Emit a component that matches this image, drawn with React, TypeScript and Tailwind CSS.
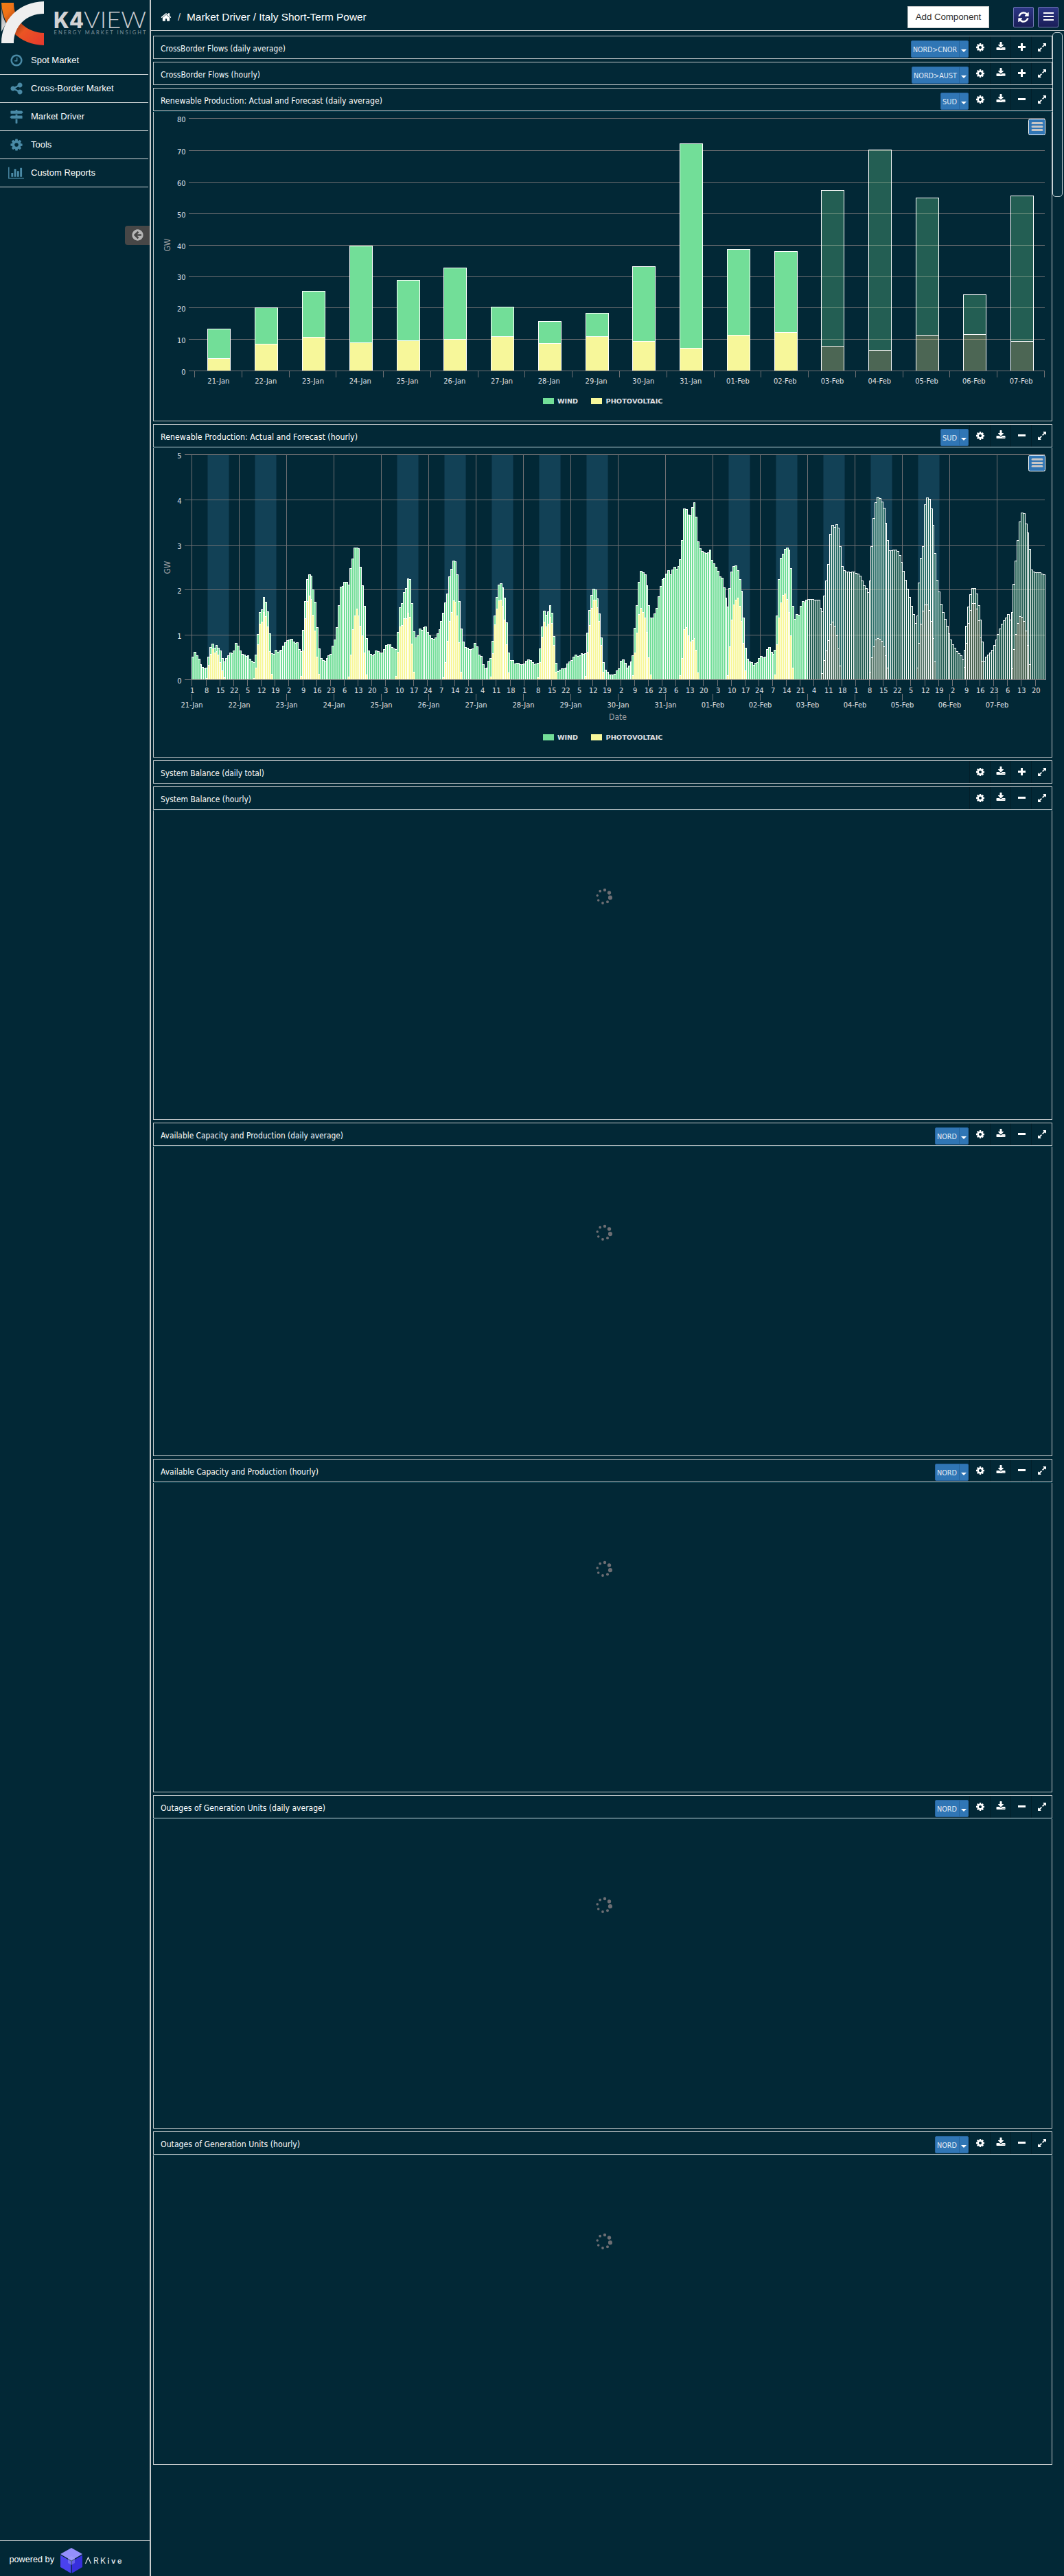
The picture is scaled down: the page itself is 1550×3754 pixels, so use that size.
import React from "react";

const ICONS = {
  home: "M1472 992v480q0 26-19 45t-45 19h-384v-384h-256v384h-384q-26 0-45-19t-19-45v-480q0-1 .5-3t.5-3l575-474 575 474q1 2 1 6zm223-69l-62 74q-8 9-21 11h-3q-13 0-21-7l-692-577-692 577q-12 8-24 7-13-2-21-11l-62-74q-8-10-7-23.5t11-21.5l719-599q32-26 76-26t76 26l244 204v-195q0-14 9-23t23-9h192q14 0 23 9t9 23v408l219 182q10 8 11 21.5t-7 23.5z",
  clock: "M1024 544v448q0 14-9 23t-23 9h-320q-14 0-23-9t-9-23v-64q0-14 9-23t23-9h224v-352q0-14 9-23t23-9h64q14 0 23 9t9 23zm416 352q0-148-73-273t-198-198-273-73-273 73-198 198-73 273 73 273 198 198 273 73 273-73 198-198 73-273zm224 0q0 209-103 385.5t-279.5 279.5-385.5 103-385.5-103-279.5-279.5-103-385.5 103-385.5 279.5-279.5 385.5-103 385.5 103 279.5 279.5 103 385.5z",
  share: "M1344 1024q133 0 226.5 93.5t93.5 226.5-93.5 226.5-226.5 93.5-226.5-93.5-93.5-226.5q0-12 2-34l-360-180q-92 86-218 86-133 0-226.5-93.5t-93.5-226.5 93.5-226.5 226.5-93.5q126 0 218 86l360-180q-2-22-2-34 0-133 93.5-226.5t226.5-93.5 226.5 93.5 93.5 226.5-93.5 226.5-226.5 93.5q-126 0-218-86l-360 180q2 22 2 34t-2 34l360 180q92-86 218-86z",
  signs: "M1745 297q10 10 10 23t-10 23l-141 141q-28 28-68 28h-1344q-26 0-45-19t-19-45v-256q0-26 19-45t45-19h576v-64q0-26 19-45t45-19h128q26 0 45 19t19 45v64h512q40 0 68 28zm-977 919h256v512q0 26-19 45t-45 19h-128q-26 0-45-19t-19-45v-512zm832-448q26 0 45 19t19 45v256q0 26-19 45t-45 19h-1344q-40 0-68-28l-141-141q-10-10-10-23t10-23l141-141q28-28 68-28h512v-192h256v192h576z",
  cog: "M1152 896q0-106-75-181t-181-75-181 75-75 181 75 181 181 75 181-75 75-181zm512-109v222q0 12-8 23t-20 13l-185 28q-19 54-39 91 35 50 107 138 10 12 10 25t-9 23q-27 37-99 108t-94 71q-12 0-26-9l-138-108q-44 23-91 38-16 136-29 186-7 28-36 28h-222q-14 0-24.5-8.5t-11.5-21.5l-28-184q-49-16-90-37l-141 107q-10 9-25 9-14 0-25-11-126-114-165-168-7-10-7-23 0-12 8-23 15-21 51-66.5t54-70.5q-27-50-41-99l-183-27q-13-2-21-12.5t-8-23.5v-222q0-12 8-23t19-13l186-28q14-46 39-92-40-57-107-138-10-12-10-24 0-10 9-23 26-36 98.5-107.5t94.5-71.5q13 0 26 10l138 107q44-23 91-38 16-136 29-186 7-28 36-28h222q14 0 24.5 8.5t11.5 21.5l28 184q49 16 90 37l142-107q9-9 24-9 13 0 25 10 129 119 165 170 7 8 7 22 0 12-8 23-15 21-51 66.5t-54 70.5q26 50 41 98l183 28q13 2 21 12.5t8 23.5z",
  chart: "M640 896v512h-256v-512h256zm384-512v1024h-256v-1024h256zm1024 1152v128h-2048v-1536h128v1408h1920zm-640-896v768h-256v-768h256zm384-384v1152h-256v-1152h256z",
  back: "M1408 960v-128q0-26-19-45t-45-19h-502l189-189q19-19 19-45t-19-45l-91-91q-18-18-45-18t-45 18l-362 362-91 91q-18 18-18 45t18 45l91 91 362 362q18 18 45 18t45-18l91-91q18-18 18-45t-18-45l-189-189h502q26 0 45-19t19-45zm256-64q0 209-103 385.5t-279.5 279.5-385.5 103-385.5-103-279.5-279.5-103-385.5 103-385.5 279.5-279.5 385.5-103 385.5 103 279.5 279.5 103 385.5z",
  refresh: "M1639 1056q0 5-1 7-64 268-268 434.5t-478 166.5q-146 0-282.5-55t-243.5-157l-129 129q-19 19-45 19t-45-19-19-45v-448q0-26 19-45t45-19h448q26 0 45 19t19 45-19 45l-137 137q71 66 161 102t187 36q134 0 250-65t186-179q11-17 53-117 8-23 30-23h192q13 0 22.5 9.5t9.5 22.5zm25-800v448q0 26-19 45t-45 19h-448q-26 0-45-19t-19-45 19-45l138-138q-148-137-349-137-134 0-250 65t-186 179q-11 17-53 117-8 23-30 23h-199q-13 0-22.5-9.5t-9.5-22.5v-7q65-268 270-434.5t480-166.5q146 0 284 55.5t245 156.5l130-129q19-19 45-19t45 19 19 45z",
  download: "M1344 1344q0-26-19-45t-45-19-45 19-19 45 19 45 45 19 45-19 19-45zm256 0q0-26-19-45t-45-19-45 19-19 45 19 45 45 19 45-19 19-45zm128-224v320q0 40-28 68t-68 28h-1472q-40 0-68-28t-28-68v-320q0-40 28-68t68-28h465l135 136q58 56 136 56t136-56l136-136h464q40 0 68 28t28 68zm-325-569q17 41-14 70l-448 448q-18 19-45 19t-45-19l-448-448q-31-29-14-70 17-39 59-39h256v-448q0-26 19-45t45-19h256q26 0 45 19t19 45v448h256q42 0 59 39z",
  expand: "M883 1056q0 13-10 23l-332 332 144 144q19 19 19 45t-19 45-45 19h-448q-26 0-45-19t-19-45v-448q0-26 19-45t45-19 45 19l144 144 332-332q10-10 23-10t23 10l114 114q10 10 10 23zm781-864v448q0 26-19 45t-45 19-45-19l-144-144-332 332q-10 10-23 10t-23-10l-114-114q-10-10-10-23t10-23l332-332-144-144q-19-19-19-45t19-45 45-19h448q26 0 45 19t19 45z",
};

function Icon({ name, className }: { name: keyof typeof ICONS; className: string }) {
  return (
    <svg viewBox={name === "chart" ? "0 0 2048 1792" : "0 0 1792 1792"} className={className} fill="currentColor">
      <path d={ICONS[name]} />
    </svg>
  );
}

const MENU: { icon: keyof typeof ICONS; label: string; size: string }[] = [
  { icon: "clock", label: "Spot Market", size: "h-5 w-5" },
  { icon: "share", label: "Cross-Border Market", size: "h-5 w-5" },
  { icon: "signs", label: "Market Driver", size: "h-5 w-5" },
  { icon: "cog", label: "Tools", size: "h-5 w-5" },
  { icon: "chart", label: "Custom Reports", size: "h-5 w-[23px]" },
];

function Logo() {
  return (
    <svg width="218" height="68" className="block shrink-0">
      <defs>
        <linearGradient id="lg-orange" x1="0" y1="0" x2="1" y2="1">
          <stop offset="0" stopColor="#f07f13" />
          <stop offset="1" stopColor="#e7382e" />
        </linearGradient>
        <linearGradient id="lg-grey" x1="0" y1="0" x2="0" y2="1">
          <stop offset="0" stopColor="#8d8d90" />
          <stop offset="1" stopColor="#e4e4e4" />
        </linearGradient>
        <linearGradient id="lg-shade" x1="0" y1="0" x2="1" y2="0.9">
          <stop offset="0.2" stopColor="#5a1c08" stopOpacity="0" />
          <stop offset="0.45" stopColor="#5a1c08" stopOpacity="0.55" />
          <stop offset="0.62" stopColor="#5a1c08" stopOpacity="0" />
        </linearGradient>
      </defs>
      <path d="M2 4C2 16 4 26 9 34L2 46Z" fill="url(#lg-grey)" />
      <path d="M2 4H20C20 30 38 47 64 48V66C28 65 4 40 2 4Z" fill="url(#lg-orange)" />
      <path d="M2 4H20C20 30 38 47 64 48V66C28 65 4 40 2 4Z" fill="url(#lg-shade)" />
      <path d="M2 63C2 28 28 3 64 2V20C38 20 20 38 20 63Z" fill="#efefef" />
      <text x="78" y="40.500" fontFamily="Inter" fontWeight="800" fontSize="32" fill="#d2d3d5" textLength="44" lengthAdjust="spacingAndGlyphs">K4</text>
      <text x="122" y="40.500" fontFamily="Lato" fontWeight="300" fontSize="33" fill="#c9ccd0" textLength="91" lengthAdjust="spacingAndGlyphs">VIEW</text>
      <text x="78.500" y="49.500" fontFamily="Lato" fontSize="7.500" fill="#7d8f98" textLength="134">ENERGY MARKET INSIGHT</text>
    </svg>
  );
}

function Sidebar() {
  return (
    <aside className="flex w-[220px] shrink-0 flex-col border-r-2 border-[#c8cccd]">
      <Logo />
      <nav className="w-[216px]">
        {MENU.map((m) => (
          <div key={m.label} className="flex h-[41px] items-center border-b border-[#d5d9da] text-[13px] text-white">
            <span className="flex w-[45px] justify-center pl-[2px] text-[#4a8aa6]">
              <Icon name={m.icon} className={m.size} />
            </span>
            <span>{m.label}</span>
          </div>
        ))}
      </nav>
      <button className="mt-14 flex h-7 w-9 items-center justify-center self-end rounded-l bg-[#474747] text-[#b5b5b5]">
        <Icon name="back" className="mb-[2px] h-[19px] w-[19px]" />
      </button>
      <div className="mt-auto flex h-[52px] items-center border-t border-[#c8cccd] pl-[13px] text-white">
        <svg width="205" height="50">
          <text x="0.500" y="29.500" fontSize="13.300" fill="#fff" textLength="65.500" lengthAdjust="spacingAndGlyphs">powered by</text>
          <path d="M91 9L107 18L91 27.500L75 18Z" fill="#958ffb" />
          <path d="M75 19.500L90.300 28.500V46L75 37Z" fill="#4a42ee" />
          <path d="M107 19.500L91.700 28.500V46L107 37Z" fill="#372fdc" />
          <path d="M86 24L91 21L96 24V31L91 34L86 31Z" fill="#a9a5fb" fillOpacity="0.4" />
          <path d="M111.500 32L115.500 23L119.500 32" fill="none" stroke="#e8e8e8" strokeWidth="1.200" />
          <text x="123" y="32" fontSize="12" fontFamily="Inter" fill="#e8e8e8" textLength="18">RK</text>
          <text x="143.500" y="32" fontSize="11" fontFamily="Inter" fontWeight="600" fill="#e8e8e8" textLength="21">ive</text>
        </svg>
      </div>
    </aside>
  );
}

function TopBar() {
  const btn = "flex h-[30px] w-[30px] items-center justify-center rounded-[2px] border border-[#7379b5] bg-gradient-to-b from-[#2c3686] to-[#1a1e58] text-white";
  return (
    <header className="flex h-[45px] shrink-0 items-center border-b border-[#c8cccd] pl-[14px] pr-2 pt-[6px] text-white">
      <Icon name="home" className="h-4 w-4" />
      <span className="ml-[9px] w-[13px] text-[15px] text-[#c8cccd]">/</span>
      <span className="whitespace-nowrap text-[15.4px] leading-5">Market Driver / Italy Short-Term Power</span>
      <div className="ml-auto flex items-center">
        <button className="mr-[35px] h-8 w-[119px] border border-[#ccc] bg-white text-[13.4px] tracking-[-0.1px] text-[#333]">Add Component</button>
        <button className={btn}><Icon name="refresh" className="mb-px h-[18px] w-[18px]" /></button>
        <button className={btn + " ml-[6px] flex-col gap-[3px] pb-[3px]"}>
          <i className="h-[2px] w-[15px] bg-white" />
          <i className="h-[2px] w-[15px] bg-white" />
          <i className="h-[2px] w-[15px] bg-white" />
        </button>
      </div>
    </header>
  );
}

function PanelHeader({ title, zone, zoneWidth, open }: { title: string; zone?: string; zoneWidth?: number; open: boolean }) {
  const cell = "flex h-full w-[30px] items-center justify-center border-l border-[#021f2a] pb-[1px]";
  return (
    <div className="flex h-[34px] items-center border border-[#c3c8ca] pl-[10px] text-white">
      <svg width="400" height="32" className="block">
        <text x="0" y="22" fontFamily="'DejaVu Sans Condensed','DejaVu Sans'" fontSize="11.700" fill="#fff" textLength={TITLE_WIDTH[title]} lengthAdjust="spacingAndGlyphs">{title}</text>
      </svg>
      <div className="ml-auto flex h-full items-center">
        {zone && (
          <div className="mt-[5px] flex h-[25px] items-center rounded-[2px] border border-[#27659f] bg-[#3076b5]" style={{ width: zoneWidth }}>
            <svg className="block h-full flex-1">
              <text x="2" y="15.500" fontFamily="'DejaVu Sans Condensed','DejaVu Sans'" fontSize="11" fill="#e6edf5" textLength={(zoneWidth ?? 0) - 20} lengthAdjust="spacingAndGlyphs">{zone}</text>
            </svg>
            <div className="flex h-full w-[13px] items-center justify-center border-l border-[#27659f] pt-[5px]">
              <svg width="8" height="4" className="block"><path d="M0 0H8L4 4Z" fill="#fff" /></svg>
            </div>
          </div>
        )}
        <div className={cell + " ml-[1px]"}><Icon name="cog" className="h-[14px] w-[14px]" /></div>
        <div className={cell}><Icon name="download" className="mb-[2px] h-[14px] w-[14px]" /></div>
        <div className={cell}>
          <svg width="12" height="12" className="mb-[2px] block">
            <rect x="1" y="5" width="11" height="3" fill="#fff" />
            {!open && <rect x="5" y="1" width="3" height="11" fill="#fff" />}
          </svg>
        </div>
        <div className={cell}><Icon name="expand" className="h-[14px] w-[14px]" /></div>
      </div>
    </div>
  );
}

const TITLE_WIDTH: Record<string, number> = {
  "CrossBorder Flows (daily average)": 182,
  "CrossBorder Flows (hourly)": 145,
  "Renewable Production: Actual and Forecast (daily average)": 323,
  "Renewable Production: Actual and Forecast (hourly)": 287,
  "System Balance (daily total)": 151,
  "System Balance (hourly)": 132,
  "Available Capacity and Production (daily average)": 266,
  "Available Capacity and Production (hourly)": 230,
  "Outages of Generation Units (daily average)": 240,
  "Outages of Generation Units (hourly)": 203,
};

const DAYS = ["21-Jan", "22-Jan", "23-Jan", "24-Jan", "25-Jan", "26-Jan", "27-Jan", "28-Jan", "29-Jan", "30-Jan", "31-Jan", "01-Feb", "02-Feb", "03-Feb", "04-Feb", "05-Feb", "06-Feb", "07-Feb"];
const FIRST_FORECAST_DAY = 13;
const GREEN = "#72de98";
const YELLOW = "#f7f79a";
const GRID = "#707073";
const LABEL = "#e0e0e3";

/* Column heights on the 368px axis: [stack total, photovoltaic]. */
const DAILY = [[61, 18], [92, 39], [116, 49], [182, 41], [132, 44], [150, 46], [93, 50], [72, 40], [84, 50], [152, 43], [331, 33], [177, 52], [174, 56], [263, 36], [322, 30], [252, 52], [111, 53], [255, 43]];

/* Hourly stack totals on the 328px axis, one row for each day. */
const HOURLY = [
  [33, 40, 35, 30, 22, 18, 16, 17, 33, 47, 52, 46, 50, 46, 42, 31, 26, 31, 35, 39, 38, 42, 53, 49],
  [42, 37, 36, 34, 35, 30, 27, 25, 36, 66, 98, 102, 120, 113, 99, 67, 38, 37, 43, 40, 42, 43, 49, 54],
  [57, 58, 59, 55, 53, 54, 44, 41, 72, 114, 146, 153, 151, 131, 113, 76, 45, 31, 28, 27, 31, 35, 37, 49],
  [58, 76, 108, 135, 136, 142, 142, 138, 162, 176, 192, 192, 191, 164, 137, 107, 60, 42, 37, 35, 37, 42, 41, 39],
  [39, 44, 50, 51, 51, 47, 45, 44, 69, 105, 111, 127, 133, 147, 146, 111, 70, 61, 64, 74, 72, 76, 77, 69],
  [64, 60, 59, 61, 67, 73, 85, 97, 112, 125, 150, 161, 173, 172, 153, 114, 74, 55, 47, 46, 44, 44, 45, 53],
  [48, 36, 34, 22, 16, 17, 27, 31, 56, 93, 120, 138, 140, 134, 119, 83, 39, 28, 28, 23, 24, 24, 22, 22],
  [23, 27, 29, 28, 25, 22, 23, 24, 45, 77, 100, 94, 99, 108, 97, 63, 24, 12, 14, 16, 16, 17, 23, 26],
  [28, 33, 36, 34, 35, 38, 37, 38, 68, 101, 123, 132, 131, 118, 96, 61, 25, 14, 11, 7, 7, 7, 8, 13],
  [16, 27, 29, 24, 17, 20, 26, 35, 75, 108, 142, 158, 156, 153, 137, 108, 90, 90, 96, 104, 121, 136, 146, 148],
  [154, 159, 153, 160, 164, 161, 165, 175, 203, 249, 248, 240, 239, 251, 258, 237, 201, 191, 187, 185, 184, 185, 189, 174],
  [169, 164, 158, 150, 148, 134, 119, 106, 133, 157, 165, 166, 159, 146, 129, 90, 46, 30, 26, 25, 21, 24, 25, 31],
  [34, 32, 33, 44, 47, 40, 37, 43, 93, 146, 177, 183, 190, 192, 189, 162, 107, 88, 95, 94, 107, 114, 112, 116],
  [117, 117, 117, 116, 116, 116, 104, 99, 122, 144, 168, 212, 225, 222, 226, 221, 194, 165, 159, 157, 157, 156, 157, 157],
  [155, 154, 151, 144, 137, 133, 127, 144, 194, 235, 258, 266, 264, 259, 250, 228, 203, 188, 188, 189, 189, 187, 181, 171],
  [158, 145, 132, 120, 107, 95, 82, 93, 141, 177, 194, 255, 265, 263, 249, 225, 184, 145, 128, 110, 98, 88, 78, 67],
  [58, 51, 46, 41, 38, 35, 29, 43, 78, 106, 124, 133, 133, 125, 108, 87, 55, 27, 33, 36, 39, 43, 50, 58],
  [66, 74, 81, 86, 90, 95, 87, 98, 139, 173, 203, 230, 243, 242, 227, 214, 190, 160, 157, 156, 156, 156, 154, 153],
];

/* Photovoltaic heights for hours 8 to 17. */
const SOLAR = [
  [2, 21, 37, 45, 39, 41, 36, 25, 13, 3],
  [2, 17, 51, 81, 84, 98, 92, 77, 41, 8],
  [5, 42, 89, 114, 122, 117, 94, 71, 33, 8],
  [4, 36, 73, 93, 103, 93, 78, 64, 39, 7],
  [5, 40, 77, 79, 89, 89, 97, 91, 52, 11],
  [3, 25, 56, 85, 98, 115, 113, 93, 54, 11],
  [4, 38, 80, 103, 115, 116, 107, 87, 51, 10],
  [3, 25, 62, 84, 77, 81, 91, 82, 50, 11],
  [5, 40, 79, 104, 116, 116, 105, 85, 50, 11],
  [6, 39, 68, 95, 104, 98, 90, 69, 32, 7],
  [6, 31, 73, 76, 64, 55, 57, 60, 43, 10],
  [6, 48, 87, 109, 116, 119, 107, 85, 53, 13],
  [7, 51, 90, 112, 123, 125, 117, 98, 64, 17],
  [9, 28, 42, 57, 80, 84, 78, 64, 45, 20],
  [11, 32, 48, 58, 60, 59, 56, 48, 35, 17],
  [17, 53, 81, 100, 109, 109, 101, 85, 60, 26],
  [18, 53, 82, 101, 111, 111, 103, 86, 61, 27],
  [16, 44, 66, 82, 92, 91, 85, 71, 50, 22],
];

const PEAK_DAYS = [0, 1, 4, 5, 6, 7, 8, 11, 12, 13, 14, 15];
const FONT = "'DejaVu Sans Condensed','DejaVu Sans',sans-serif";

function Legend({ y }: { y: number }) {
  return (
    <g fontFamily="'DejaVu Sans'" fontWeight="700" fontSize="9.500" fill={LABEL}>
      <rect x="567" y={y} width="16" height="9" fill={GREEN} />
      <text x="588" y={y + 8} textLength="30" lengthAdjust="spacingAndGlyphs">WIND</text>
      <rect x="637" y={y} width="16" height="9" fill={YELLOW} />
      <text x="658.500" y={y + 8} textLength="83" lengthAdjust="spacingAndGlyphs">PHOTOVOLTAIC</text>
    </g>
  );
}

function MenuButton() {
  return (
    <g>
      <rect x="1274.500" y="10.500" width="24" height="23" rx="2" fill="#3076b5" stroke="#fff" />
      <path d="M1280 16.500h14M1280 21.500h14M1280 26.500h14" stroke="#c6c6c6" strokeWidth="3" strokeLinecap="round" />
    </g>
  );
}

function Column({ x, w, total, pv, base, forecast }: { x: number; w: number; total: number; pv: number; base: number; forecast: boolean }) {
  const fo = forecast ? 0.3 : 1;
  return (
    <g stroke="#fff">
      <rect x={x} y={base - total} width={w} height={total - pv} fill={GREEN} fillOpacity={fo} />
      {pv > 0 && <rect x={x} y={base - pv} width={w} height={pv} fill={YELLOW} fillOpacity={fo} />}
    </g>
  );
}

/* Both charts use the panel body's own coordinates: 1308 x 449. */
function DailyChart() {
  const x0 = 60.5;
  const step = 1238 / 18;
  const base = 377.5;
  const grid = [9, 56, 102, 148, 194, 239, 285, 331, 377];
  return (
    <svg width="1308" height="449" className="block" fontFamily={FONT} fontSize="11" fill={LABEL}>
      {grid.map((y, i) => (
        <g key={y}>
          <path d={`M51 ${y + 0.5}H1298`} stroke={GRID} />
          <text x="46.500" y={y + 5.5} textAnchor="end">{80 - i * 10}</text>
        </g>
      ))}
      {DAILY.map(([t, p], i) => (
        <Column key={i} x={Math.floor(x0 + step * (i + 0.5) - 16) + 0.5} w={33} total={t} pv={p} base={base} forecast={i >= FIRST_FORECAST_DAY} />
      ))}
      <path d={`M51 ${base}H1298`} stroke={GRID} />
      {Array.from({ length: 19 }, (_, i) => {
        const x = Math.floor(x0 + step * i) - 0.5;
        return <path key={i} d={`M${x} 378V387`} stroke={GRID} />;
      })}
      {DAYS.map((d, i) => (
        <text key={d} x={x0 + step * (i + 0.5) - 0.5} y="396" textAnchor="middle">{d}</text>
      ))}
      <text transform="translate(24 194) rotate(-90)" textAnchor="middle" fill="#a0a0a3" fontSize="12">GW</text>
      <Legend y={417} />
      <MenuButton />
    </svg>
  );
}

function HourlyChart() {
  const x0 = 55.5;
  const hour = 1242.5 / 432;
  const day = hour * 24;
  const base = 337.5;
  const grid = [9, 75, 141, 206, 272, 337];
  const at = (n: number) => Math.round(x0 - 0.5 + hour * n) + 0.5;
  return (
    <svg width="1308" height="449" className="block" fontFamily={FONT} fontSize="11" fill={LABEL}>
      {PEAK_DAYS.map((d) => (
        <rect key={d} x={Math.round(x0 + d * day + 22.5) + 0.5} y="9.500" width="31" height="328" fill="#124156" stroke="#0b3447" />
      ))}
      {grid.map((y, i) => (
        <g key={y}>
          <path d={`M45 ${y + 0.5}H1298`} stroke={GRID} />
          <text x="40.500" y={y + 5.5} textAnchor="end">{5 - i}</text>
        </g>
      ))}
      {DAYS.map((d, i) => (
        <path key={d} d={`M${at(i * 24)} 9.500V337`} stroke={GRID} />
      ))}
      {HOURLY.flatMap((row, d) =>
        row.map((t, h) => {
          const n = d * 24 + h;
          return <Column key={n} x={at(n)} w={at(n + 1) - at(n)} total={t} pv={SOLAR[d][h - 7] ?? 0} base={base} forecast={d >= FIRST_FORECAST_DAY} />;
        })
      )}
      <path d={`M45 ${base}H1298`} stroke={GRID} />
      {Array.from({ length: 62 }, (_, k) => {
        const x = Math.floor(k === 0 ? 55 : 55.95 + hour * 7 * k) + 0.5;
        return (
          <g key={k}>
            <path d={`M${x} 338V347`} stroke={GRID} />
            <text x={x + 0.7} y="356.500" textAnchor="middle">{((k * 7) % 24) + 1}</text>
          </g>
        );
      })}
      {DAYS.map((d, i) => (
        <g key={d}>
          <path d={`M${at(i * 24)} 358V368`} stroke={GRID} />
          <text x={at(i * 24)} y="377.500" textAnchor="middle">{d}</text>
        </g>
      ))}
      <text transform="translate(24 174) rotate(-90)" textAnchor="middle" fill="#a0a0a3" fontSize="12">GW</text>
      <text x="676" y="396" textAnchor="middle" fill="#a0a0a3" fontSize="12">Date</text>
      <Legend y={417} />
      <MenuButton />
    </svg>
  );
}

function Spinner() {
  const dots = [[13, 3, 2.2], [19.5, 7, 2.7], [21, 14.2, 3.1], [17, 20.3, 2], [10, 22, 1.9], [3.7, 18, 1.8], [2.2, 11, 1.8], [6.2, 4.7, 1.9]];
  return (
    <div className="flex justify-center pl-[3px] pt-[113px]">
      <svg width="24" height="24" className="block">
        {dots.map(([x, y, r], i) => <circle key={i} cx={x} cy={y} r={r} fill="#6d6e73" />)}
      </svg>
    </div>
  );
}

function Panel({ title, zone, zoneWidth, children }: { title: string; zone?: string; zoneWidth?: number; children?: React.ReactNode }) {
  return (
    <section>
      <PanelHeader title={title} zone={zone} zoneWidth={zoneWidth} open={!!children} />
      {children && (
        <div className="h-[452px] border-t border-t-[#063a4a]">
          <div className="h-[451px] border-x border-b border-[#c3c8ca]">{children}</div>
        </div>
      )}
    </section>
  );
}

export default function App() {
  return (
    <div className="flex h-[3754px] w-[1550px] overflow-hidden bg-[#022836] font-['Liberation_Sans',sans-serif]">
      <Sidebar />
      <div className="flex w-[1330px] flex-col">
        <TopBar />
        <div className="flex">
          <main className="ml-[3px] mt-[7px] flex w-[1310px] flex-col gap-1">
            <Panel title="CrossBorder Flows (daily average)" zone="NORD>CNOR" zoneWidth={84} />
            <Panel title="CrossBorder Flows (hourly)" zone="NORD>AUST" zoneWidth={83} />
            <Panel title="Renewable Production: Actual and Forecast (daily average)" zone="SUD" zoneWidth={41}><DailyChart /></Panel>
            <Panel title="Renewable Production: Actual and Forecast (hourly)" zone="SUD" zoneWidth={41}><HourlyChart /></Panel>
            <Panel title="System Balance (daily total)" />
            <Panel title="System Balance (hourly)"><Spinner /></Panel>
            <Panel title="Available Capacity and Production (daily average)" zone="NORD" zoneWidth={49}><Spinner /></Panel>
            <Panel title="Available Capacity and Production (hourly)" zone="NORD" zoneWidth={49}><Spinner /></Panel>
            <Panel title="Outages of Generation Units (daily average)" zone="NORD" zoneWidth={49}><Spinner /></Panel>
            <Panel title="Outages of Generation Units (hourly)" zone="NORD" zoneWidth={49}><Spinner /></Panel>
          </main>
          <div className="mt-[2px] h-60 w-[15px] rounded-[5px] border border-[#c8d4d8] bg-[#06303f]" />
        </div>
      </div>
    </div>
  );
}
